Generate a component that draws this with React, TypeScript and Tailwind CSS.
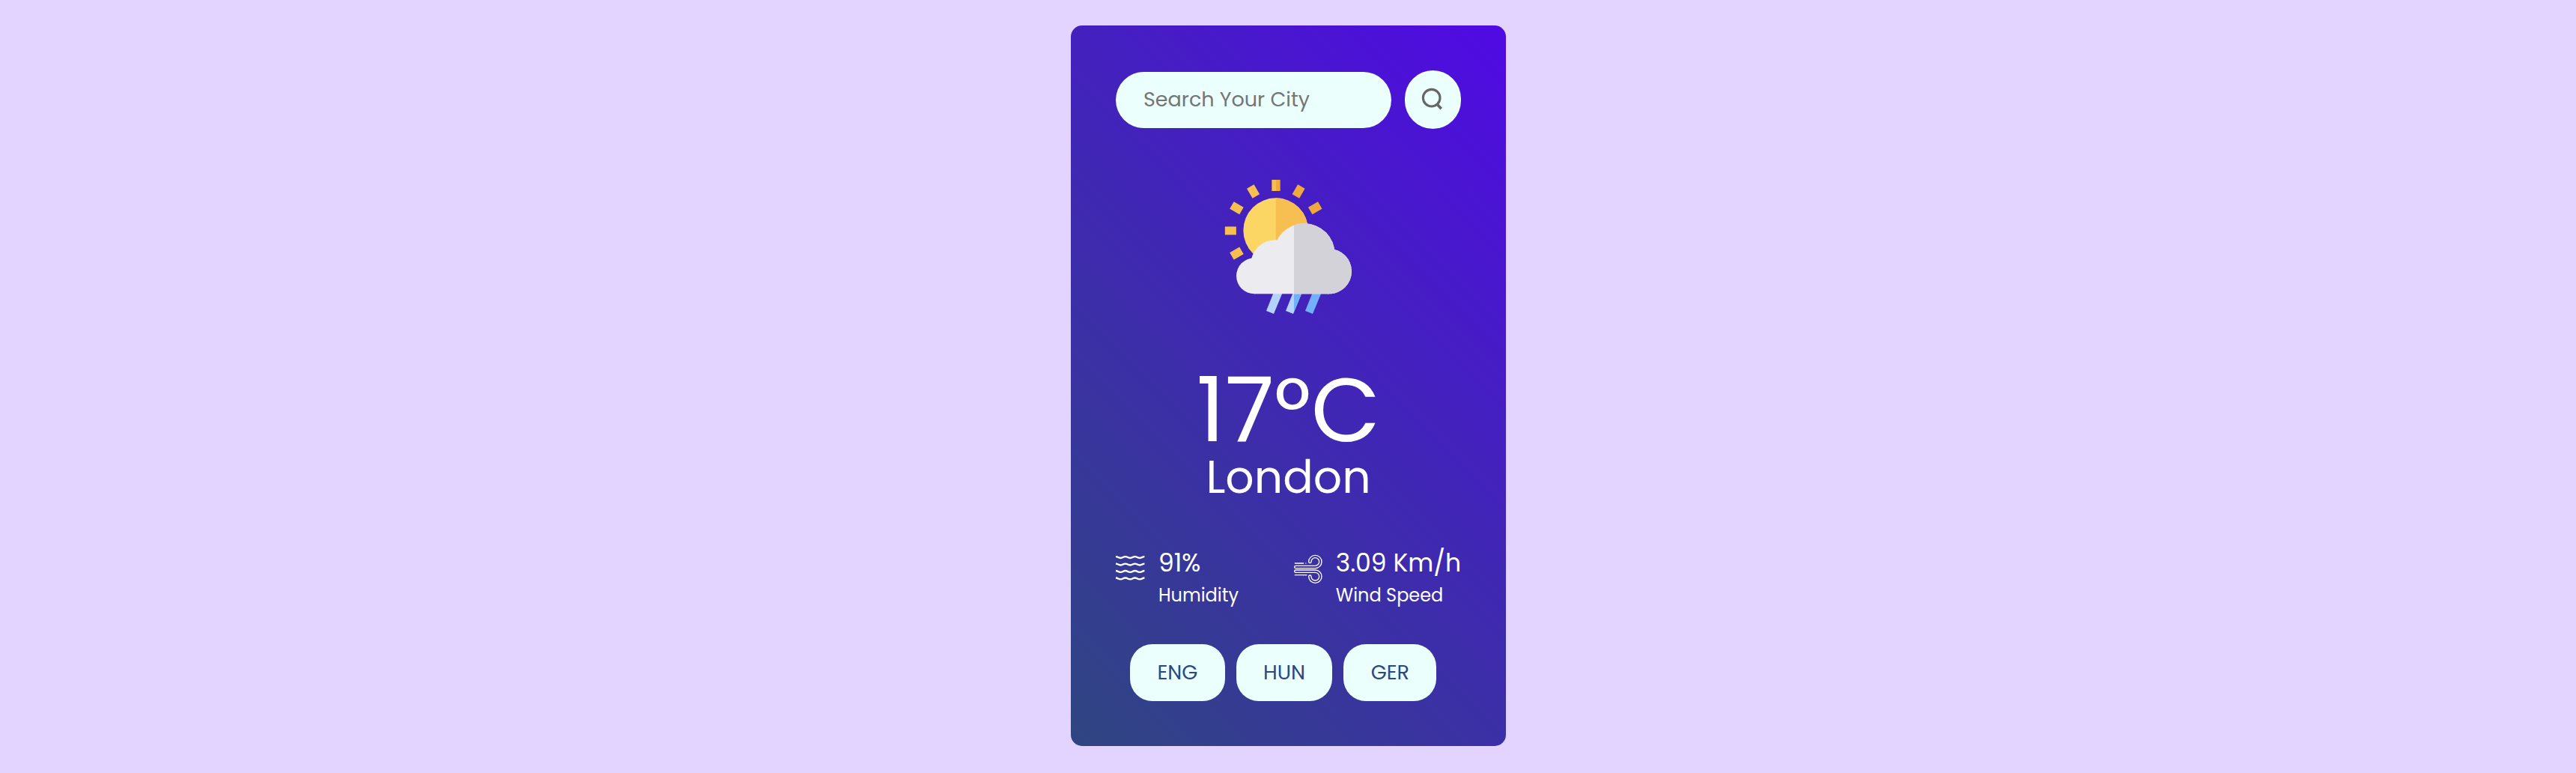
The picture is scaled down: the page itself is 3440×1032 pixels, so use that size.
import type { ReactNode } from 'react';

function SearchIcon() {
  return (
    <svg viewBox="0 0 75 78" className="h-[78px] w-[75px]" fill="none" stroke="#666" strokeWidth="3.1">
      <circle cx="35.7" cy="36.7" r="11.3" />
      <path d="M43 45 48.7 51.2" strokeWidth="3.6" />
    </svg>
  );
}

const rays = [
  { angle: -120, fill: '#f7be51' },
  { angle: -90, fill: '#f7be51' },
  { angle: -60, fill: '#f7be51' },
  { angle: -30, fill: '#f7be51' },
  { angle: 30, fill: '#f0a93e' },
  { angle: 60, fill: '#f0a93e' },
];

function RainIcon() {
  return (
    <svg viewBox="0 0 600 600" className="mt-[58px] ml-[130px] size-[200px]">
      <defs>
        <clipPath id="right-half">
          <rect x="324" y="0" width="276" height="600" />
        </clipPath>
        <g id="cloud">
          <circle cx="165" cy="415" r="72" />
          <circle cx="250" cy="371" r="100" />
          <circle cx="365" cy="328" r="123" />
          <circle cx="465" cy="397" r="90" />
          <rect x="165" y="371" width="300" height="116" />
        </g>
      </defs>
      {rays.map((r) => (
        <rect key={r.angle} x="235" y="30" width="33" height="45" fill={r.fill} transform={`rotate(${r.angle} 251.5 234)`} />
      ))}
      <rect x="235" y="30" width="17" height="45" fill="#f7be51" />
      <rect x="252" y="30" width="17" height="45" fill="#f0a93e" />
      <circle cx="251" cy="233" r="130" fill="#fcd664" />
      <path d="M251 103a130 130 0 0 1 0 260z" fill="#f7be51" />
      <path d="M243 480h36l-36 87-30-12z" fill="#b4d2fe" />
      <path d="M321 480h36l-36 87-30-12z" fill="#b4d2fe" />
      <path d="M321 480h36l-36 87-30-12z" fill="#74affb" clipPath="url(#right-half)" />
      <path d="M399 480h36l-36 87-30-12z" fill="#74affb" />
      <use href="#cloud" fill="#ecebf0" />
      <use href="#cloud" fill="#d3d2d8" clipPath="url(#right-half)" />
    </svg>
  );
}

function HumidityIcon() {
  const wave = 'q5 0 9.6 2.8t9.6 2.8t9.6 -2.8t9.6 -2.8';
  return (
    <svg viewBox="0 0 117 117" className="mt-[3px] size-[39px]" fill="none" stroke="#fff" strokeWidth="7">
      {[15.5, 44, 72, 100.5].map((y) => (
        <path key={y} d={`M0 ${y}${wave}${wave}${wave}`} />
      ))}
    </svg>
  );
}

function WindIcon() {
  const tube = 'M25 67H103A21 21 0 1 0 82 46';
  return (
    <svg viewBox="15 16 117 117" className="mt-[5px] size-[39px]" fill="none" strokeLinecap="round">
      <defs>
        <mask id="tube" maskUnits="userSpaceOnUse" x="0" y="0" width="150" height="150">
          <path d={tube} stroke="#fff" strokeWidth="14" />
          <path d={tube} stroke="#000" strokeWidth="6" />
        </mask>
        <g id="gust">
          <rect x="0" y="0" width="150" height="150" fill="#fff" mask="url(#tube)" />
          <path d="M22 52H56M65.5 52h.1" stroke="#fff" strokeWidth="4" />
        </g>
      </defs>
      <use href="#gust" />
      <use href="#gust" transform="translate(0 151) scale(1 -1)" />
      <path d="M56 99H69" stroke="#fff" strokeWidth="4" />
    </svg>
  );
}

function Detail({ icon, value, label }: { icon: ReactNode; value: string; label: string }) {
  return (
    <div className="flex items-start gap-[18px]">
      {icon}
      <div className="whitespace-nowrap">
        <p className="text-[33px] leading-[33px]">{value}</p>
        <p className="mt-[15px] text-[24px] leading-[24px]">{label}</p>
      </div>
    </div>
  );
}

export default function App() {
  return (
    <main className="flex h-[1032px] justify-center bg-[#e3d3ff] pt-[34px] pl-px font-['Poppins','Inter',sans-serif]">
      <section className="flex h-[962px] w-[581px] flex-col rounded-[15px] bg-[linear-gradient(45deg,#2f4680,#500ae4)] p-[60px] text-white">
        <div className="flex items-center gap-[18px]">
          <input
            type="text"
            placeholder="Search Your City"
            className="h-[75px] w-[368px] rounded-full bg-[#ebfffc] px-[37px] text-[27px] text-[#555] outline-none placeholder:text-[#757575]"
          />
          <button aria-label="Search" className="h-[78px] w-[75px] rounded-full bg-[#ebfffc]">
            <SearchIcon />
          </button>
        </div>
        <RainIcon />
        <h1 className="mt-[57px] text-center text-[120px] leading-[120px]">17°C</h1>
        <h2 className="text-center text-[60px] leading-[60px]">London</h2>
        <div className="mt-[68px] flex justify-between">
          <Detail icon={<HumidityIcon />} value="91%" label="Humidity" />
          <Detail icon={<WindIcon />} value="3.09 Km/h" label="Wind Speed" />
        </div>
        <div className="mt-[53px] ml-[19px] flex gap-[15px]">
          {['ENG', 'HUN', 'GER'].map((lang) => (
            <button key={lang} className="h-[76px] rounded-[30px] bg-[#ebfffc] px-[36.4px] text-[27px] text-[#2f4680]">
              {lang}
            </button>
          ))}
        </div>
      </section>
    </main>
  );
}
